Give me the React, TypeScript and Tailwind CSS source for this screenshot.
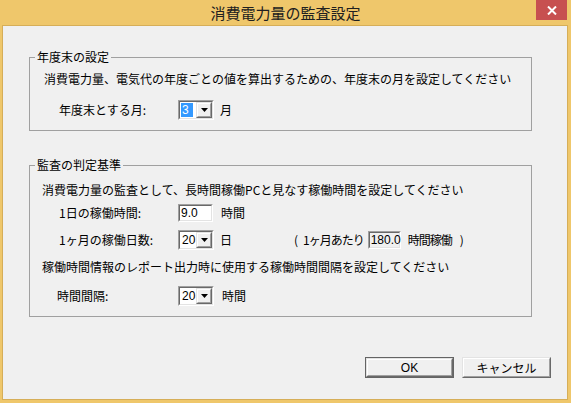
import type { ReactNode } from "react"

function Sunken({ className, children }: { className: string; children: ReactNode }) {
  return (
    <div className={`flex shrink-0 border border-t-[#a0a0a0] border-l-[#a0a0a0] border-r-white border-b-white ${className}`}>
      <div className="flex flex-1 min-w-0 border border-t-[#696969] border-l-[#696969] border-r-[#e3e3e3] border-b-[#e3e3e3]">
        {children}
      </div>
    </div>
  )
}

function Raised({ className, children }: { className: string; children: ReactNode }) {
  return (
    <div className={`flex border border-t-[#e3e3e3] border-l-[#e3e3e3] border-r-[#696969] border-b-[#696969] bg-[#f0f0f0] ${className}`}>
      <div className="flex flex-1 items-center justify-center border border-t-white border-l-white border-r-[#a0a0a0] border-b-[#a0a0a0]">
        {children}
      </div>
    </div>
  )
}

function Combo({ value, selected }: { value: string; selected?: boolean }) {
  return (
    <Sunken className="h-[20px] w-[36px]">
      <div className="flex flex-1 items-center bg-white pl-[1px] font-['Liberation_Sans',sans-serif] text-[12px]">
        {selected ? (
          <span className="h-[14px] w-[12px] bg-[#3399ff] pl-[1px] leading-[14px] text-white">{value}</span>
        ) : (
          <span className="pl-[1px] leading-[14px]">{value}</span>
        )}
      </div>
      <Raised className="w-[16px]">
        <svg width="7" height="4" viewBox="0 0 7 4">
          <path d="M0 0h7L3.5 4z" fill="#000" />
        </svg>
      </Raised>
    </Sunken>
  )
}

function Edit({ value, className }: { value: string; className: string }) {
  return (
    <Sunken className={className}>
      <div className="flex flex-1 items-center pl-[1px] font-['Liberation_Sans',sans-serif] text-[12px] leading-[14px]">
        {value}
      </div>
    </Sunken>
  )
}

export default function App() {
  return (
    <div className="flex h-[403px] w-[571px] flex-col bg-[#efc76b] font-['Noto_Sans_CJK_JP',sans-serif] text-[12px] leading-[16px] text-black">
      {/* Title bar */}
      <div className="grid h-[25px] grid-cols-[1fr_auto_1fr]">
        <div />
        <div className="pt-[3px] text-[15px] leading-[20px] text-[#202020]">消費電力量の監査設定</div>
        <div className="flex justify-end pr-[4px]">
          <button className="flex h-[20px] w-[31px] items-center justify-center bg-[#c75050]">
            <svg width="10" height="9" viewBox="0 0 10 9">
              <path d="M1 0.5l8 8M9 0.5l-8 8" stroke="#fff" strokeWidth="2" />
            </svg>
          </button>
        </div>
      </div>

      {/* Client area */}
      <div className="mb-[3px] ml-[2px] mr-[3px] flex flex-1 flex-col border border-[#d6ae58] bg-[#f0f0f0] pl-[26px] pt-[23px]">
        <fieldset className="w-[503px] border border-[#a0a0a0] pb-[10px]">
          <legend className="ml-[5px] px-[2px] leading-[16px]">年度末の設定</legend>
          <div className="mt-[6px] pl-[14px]">消費電力量、電気代の年度ごとの値を算出するための、年度末の月を設定してください</div>
          <div className="mt-[13px] flex h-[20px] items-center pl-[29px]">
            <span className="w-[119px]">年度末とする月:</span>
            <Combo value="3" selected />
            <span className="ml-[6px]">月</span>
          </div>
        </fieldset>

        <fieldset className="mt-[26px] w-[503px] border border-[#a0a0a0] pb-[10px]">
          <legend className="ml-[5px] px-[2px] leading-[16px]">監査の判定基準</legend>
          <div className="mt-[9px] pl-[12px]">消費電力量の監査として、長時間稼働PCと見なす稼働時間を設定してください</div>
          <div className="mt-[5px] flex h-[20px] items-center pl-[29px]">
            <span className="w-[119px]">1日の稼働時間:</span>
            <Edit value="9.0" className="h-[18px] w-[35px] bg-white" />
            <span className="ml-[8px]">時間</span>
          </div>
          <div className="mt-[7px] flex h-[20px] items-center whitespace-nowrap pl-[29px]">
            <span className="w-[119px]">1ヶ月の稼働日数:</span>
            <Combo value="20" />
            <span className="ml-[6px] w-[74px]">日</span>
            <span className="w-[9px]">(</span>
            <span className="tracking-[-1px]">1ヶ月あたり</span>
            <Edit value="180.0" className="ml-[4px] h-[18px] w-[33px] bg-[#f0f0f0]" />
            <span className="ml-[7px] tracking-[-1px]">時間稼働</span>
            <span className="ml-[8px]">)</span>
          </div>
          <div className="mt-[9px] pl-[12px]">稼働時間情報のレポート出力時に使用する稼働時間間隔を設定してください</div>
          <div className="mt-[11px] flex h-[20px] items-center pl-[27px]">
            <span className="w-[121px]">時間間隔:</span>
            <Combo value="20" />
            <span className="ml-[8px]">時間</span>
          </div>
        </fieldset>

        <div className="mt-[40px] flex w-[522px] justify-end gap-[8px]">
          <div className="flex h-[21px] w-[89px] border border-[#646464]">
            <Raised className="flex-1">
              <span className="font-['Liberation_Sans',sans-serif]">OK</span>
            </Raised>
          </div>
          <Raised className="h-[21px] w-[89px]">
            <span>キャンセル</span>
          </Raised>
        </div>
      </div>
    </div>
  )
}
